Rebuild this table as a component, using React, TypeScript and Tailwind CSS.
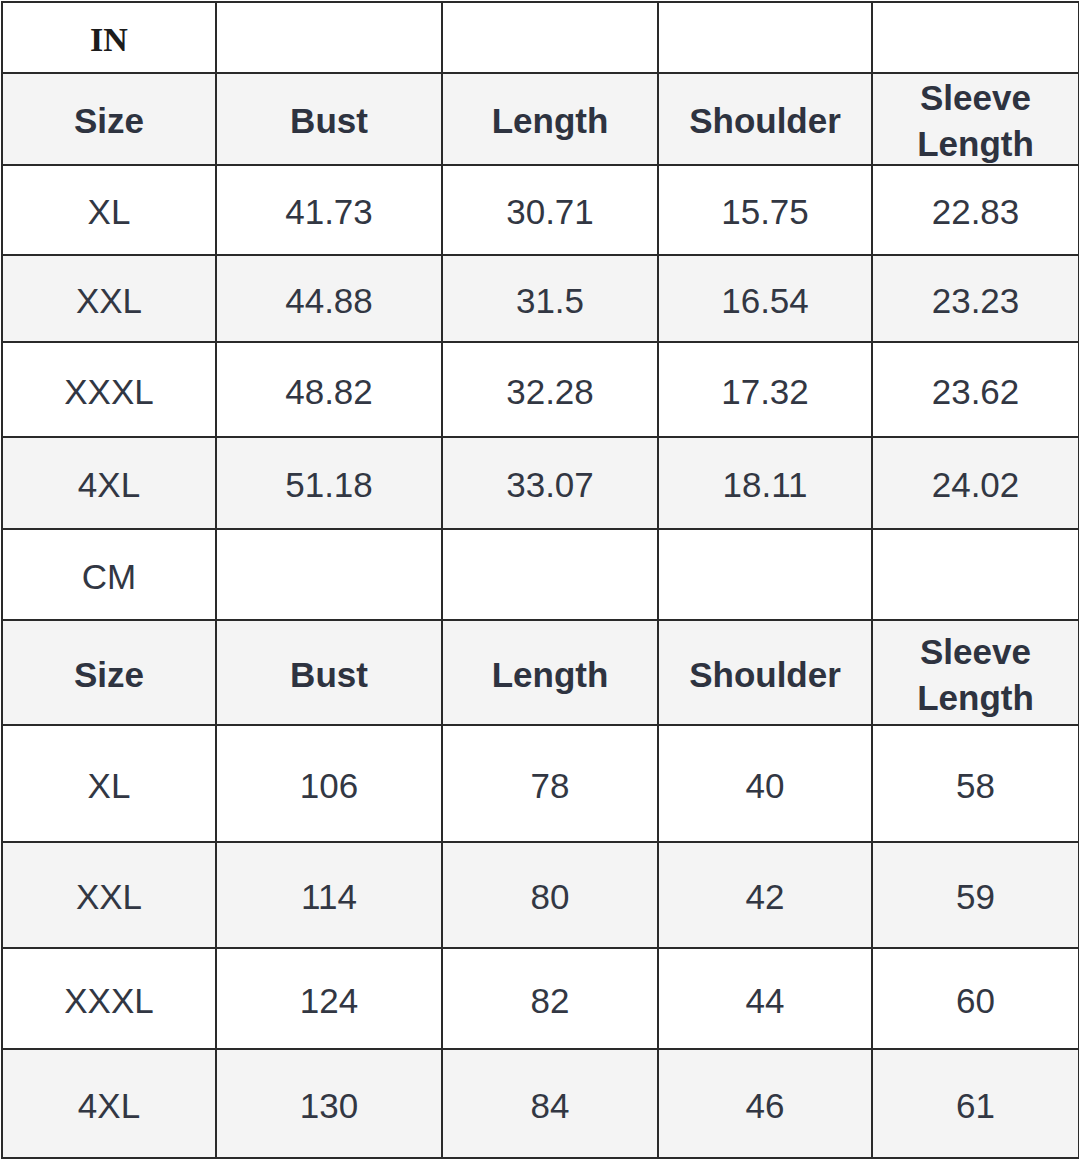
const HEIGHTS = [69, 90, 88, 85, 93, 90, 89, 103, 115, 104, 99, 107];

type Row = { cells: string[]; gray: boolean; head?: boolean; label?: "in" | "cm" };

const ROWS: Row[] = [
  { cells: ["IN", "", "", "", ""], gray: false, label: "in" },
  { cells: ["Size", "Bust", "Length", "Shoulder", "Sleeve\nLength"], gray: true, head: true },
  { cells: ["XL", "41.73", "30.71", "15.75", "22.83"], gray: false },
  { cells: ["XXL", "44.88", "31.5", "16.54", "23.23"], gray: true },
  { cells: ["XXXL", "48.82", "32.28", "17.32", "23.62"], gray: false },
  { cells: ["4XL", "51.18", "33.07", "18.11", "24.02"], gray: true },
  { cells: ["CM", "", "", "", ""], gray: false, label: "cm" },
  { cells: ["Size", "Bust", "Length", "Shoulder", "Sleeve\nLength"], gray: true, head: true },
  { cells: ["XL", "106", "78", "40", "58"], gray: false },
  { cells: ["XXL", "114", "80", "42", "59"], gray: true },
  { cells: ["XXXL", "124", "82", "44", "60"], gray: false },
  { cells: ["4XL", "130", "84", "46", "61"], gray: true },
];

function Cell({ text, row, height }: { text: string; row: Row; height: number }) {
  const bg = row.gray ? "bg-[#f4f4f4]" : "bg-white";
  let font = "font-['Liberation_Sans',Arial,sans-serif] text-[35px] font-normal text-[#323743]";
  if (row.head) font = "font-['Liberation_Sans',Arial,sans-serif] text-[35px] font-bold text-[#2e3340]";
  if (row.label === "in" && text)
    font = "font-['Liberation_Serif','Times_New_Roman',serif] text-[34px] font-bold text-[#1c1c1c]";
  return (
    <div
      className={`${bg} ${font} flex items-center justify-center pt-[4px] text-center leading-[46px] whitespace-pre-line`}
      style={{ height }}
    >
      {text}
    </div>
  );
}

export default function App() {
  return (
    <div className="w-[1080px] h-[1160px] bg-white">
      <div className="ml-[1px] mt-[1px] grid w-[1078px] grid-cols-[212px_224px_214px_212px_205px] gap-[2px] border-2 border-[#2a2a2a] bg-[#2a2a2a]">
        {ROWS.map((row, r) =>
          row.cells.map((c, i) => <Cell key={`${r}-${i}`} text={c} row={row} height={HEIGHTS[r]} />)
        )}
      </div>
    </div>
  );
}
